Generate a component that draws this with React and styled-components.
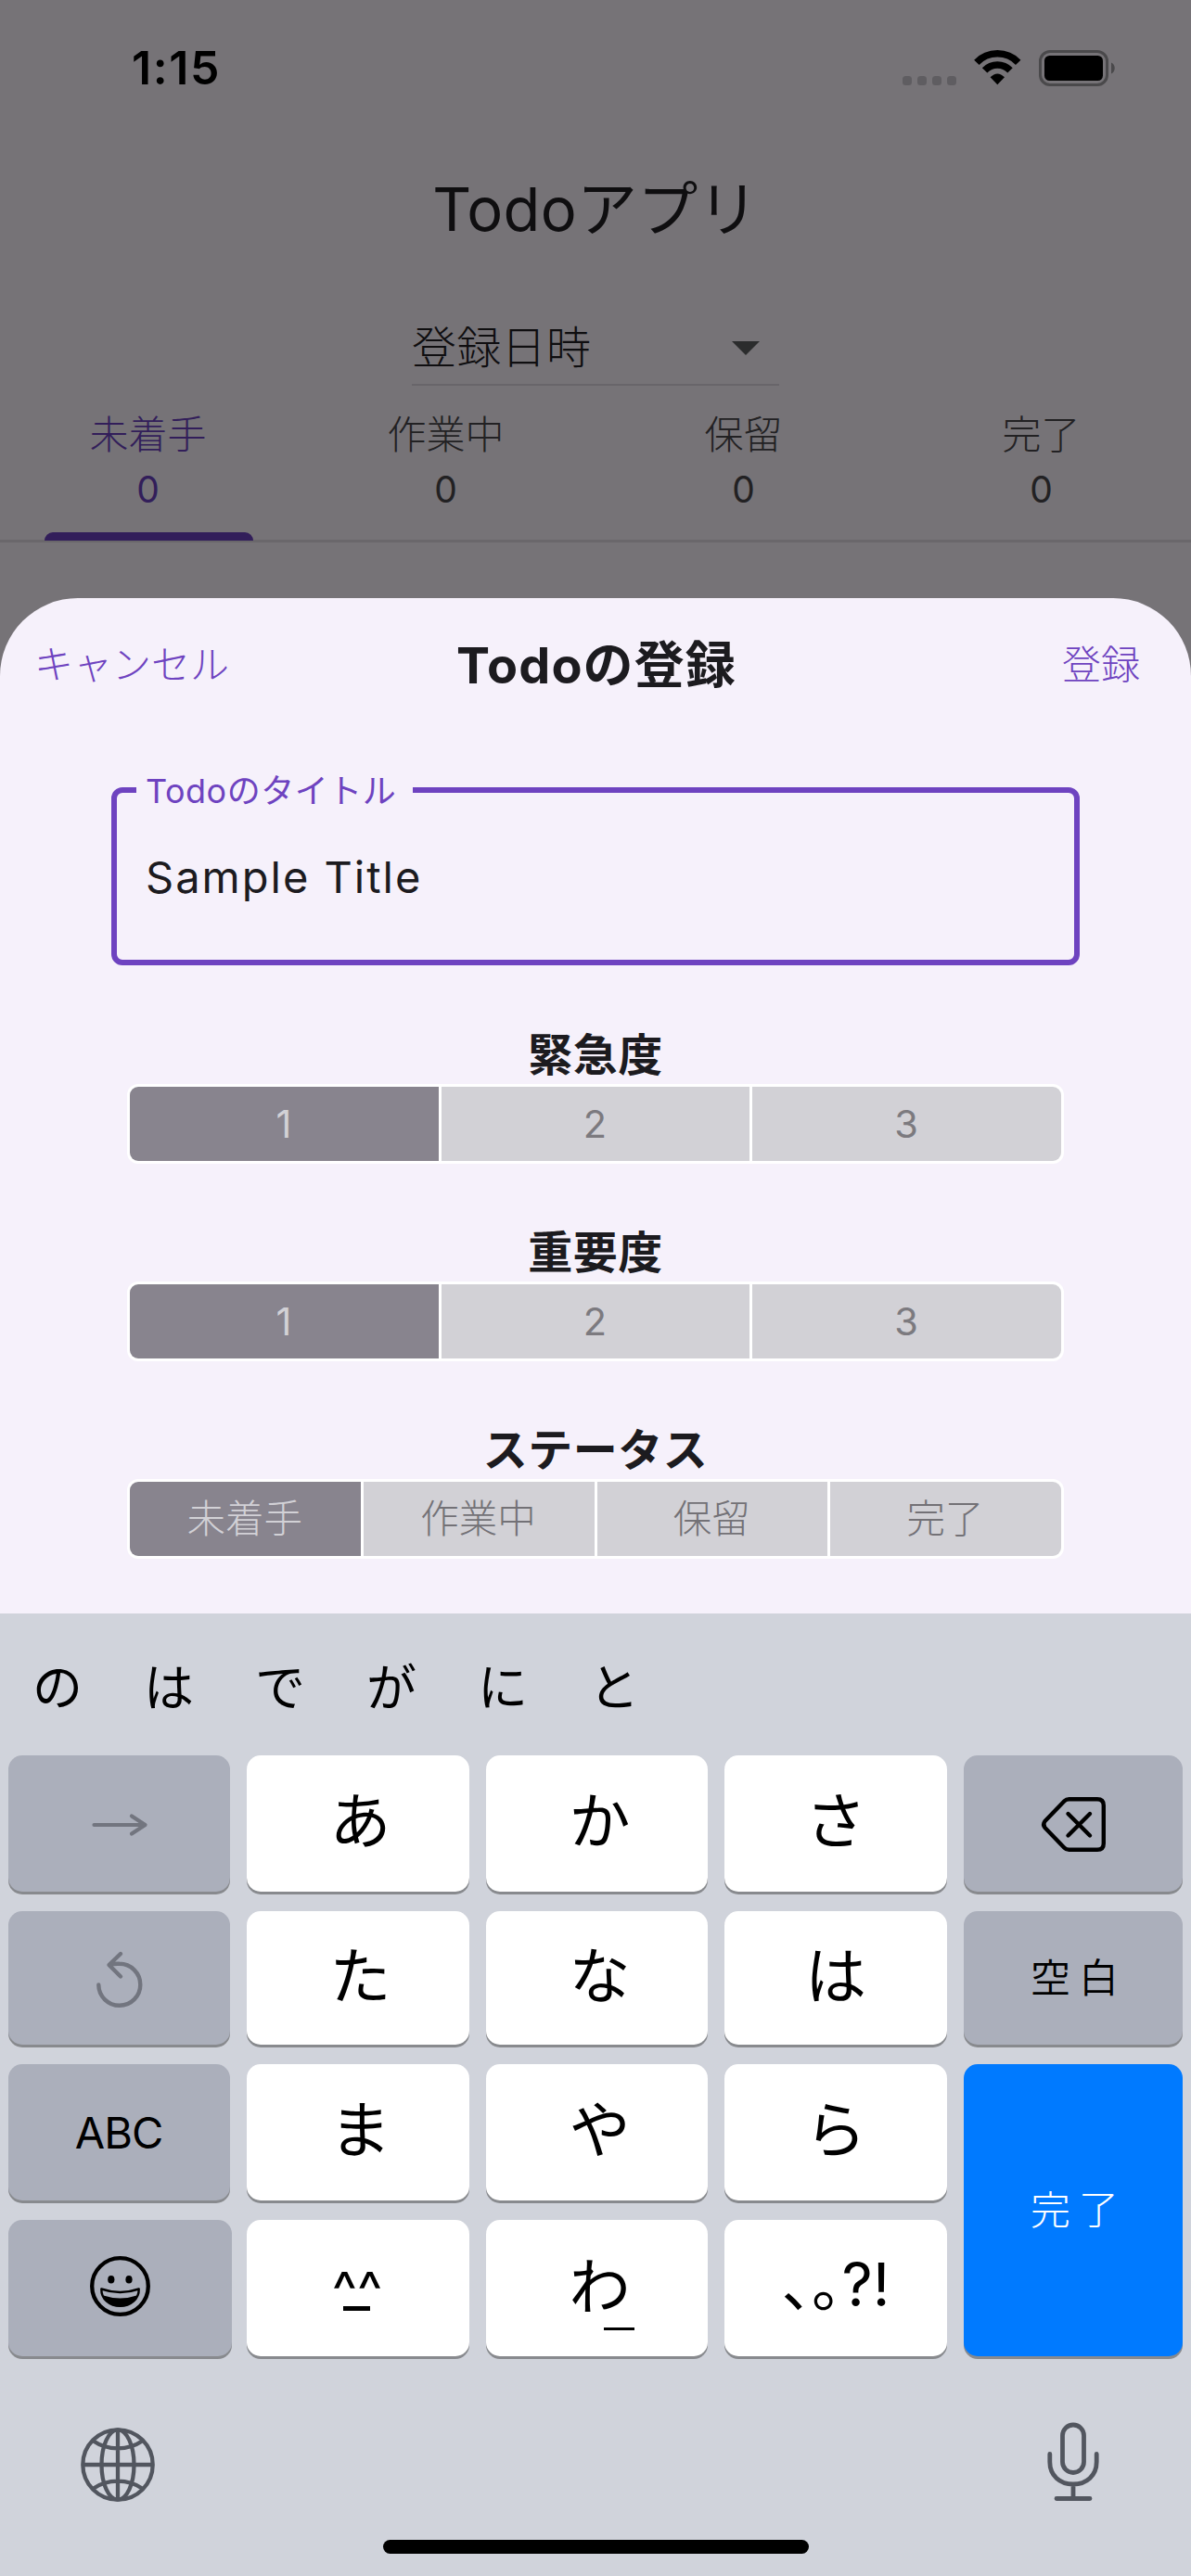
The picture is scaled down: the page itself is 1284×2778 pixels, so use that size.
import React from "react";
import styled, { createGlobalStyle } from "styled-components";

const GlobalStyle = createGlobalStyle`
  * { box-sizing: border-box; }
  body {
    margin: 0;
    background: #767377;
    font-family: Inter, "Noto Sans CJK JP", sans-serif;
    -webkit-font-smoothing: antialiased;
  }
  button { font: inherit; border: 0; padding: 0; background: none; }
`;

const Phone = styled.div`
  width: 1284px;
  height: 2778px;
  display: flex;
  flex-direction: column;
  overflow: hidden;
  background: #767377;
`;

const Page = styled.header`
  height: 645px;
  display: flex;
  flex-direction: column;
  align-items: center;
`;

const StatusBar = styled.div`
  width: 100%;
  height: 146px;
  padding: 0 82px 0 142px;
  display: flex;
  align-items: center;
  justify-content: space-between;
`;

const Clock = styled.span`
  font-size: 50px;
  font-weight: 600;
  letter-spacing: 1.6px;
  color: #000;
`;

const StatusIcons = styled.div`
  display: flex;
  align-items: center;
  gap: 19px;
`;

const Signal = styled.div`
  display: flex;
  gap: 6px;
  margin-top: 27px;
`;

const SignalDot = styled.i`
  width: 10px;
  height: 10px;
  border-radius: 3.5px;
  background: #5f5d61;
`;

const AppTitle = styled.h1`
  margin: 0;
  height: 159px;
  line-height: 159px;
  font-size: 65px;
  font-weight: 400;
  letter-spacing: 0.3px;
  color: #0f0e10;
`;

const SortSelect = styled.div`
  width: 396px;
  height: 84px;
  margin-top: 27px;
  padding: 0 21px 4px 0;
  display: flex;
  align-items: center;
  justify-content: space-between;
  border-bottom: 2px solid #68656a;
  font-size: 48px;
  font-weight: 300;
  letter-spacing: 0.3px;
  color: #0f0e10;
`;

const Tabs = styled.nav`
  width: 100%;
  height: 169px;
  display: grid;
  grid-template-columns: repeat(4, 1fr);
  border-bottom: 3px solid #6a676b;
`;

const Tab = styled.div`
  display: flex;
  flex-direction: column;
  align-items: center;
  padding: 23px 2px 0 0;
  font-size: 42px;
  font-weight: 300;
  line-height: 60px;
  color: ${(p) => (p.$active ? "#321e5a" : "#222123")};
`;

const TabCount = styled.span`
  font-size: 39px;
  font-weight: 400;
  line-height: 58px;
`;

const TabIndicator = styled.i`
  width: 225px;
  height: 9px;
  margin: 17px 0 0 2px;
  border-radius: 9px 9px 0 0;
  background: #321e5a;
`;

const Sheet = styled.main`
  height: 1095px;
  border-radius: 84px 84px 0 0;
  background: #f6f1fb;
`;

const SheetHeader = styled.div`
  height: 143px;
  padding: 0 36px 7px 38px;
  display: grid;
  grid-template-columns: 1fr auto 1fr;
  align-items: center;
`;

const TextAction = styled.button`
  justify-self: ${(p) => p.$side};
  margin: ${(p) => (p.$side === "end" ? "0 19px 0 0" : "0 0 0 -1px")};
  font-size: 42px;
  font-weight: 300;
  color: #6e43c0;
`;

const SheetTitle = styled.h2`
  margin: 0;
  font-size: 54px;
  font-weight: 700;
  letter-spacing: 1.1px;
  color: #1c1b1f;
`;

const Field = styled.fieldset`
  margin: 46px 120px 0;
  height: 207px;
  padding: 0 31px;
  border: 6px solid #6e43c0;
  border-radius: 12px;
`;

const FieldLabel = styled.legend`
  margin-left: -10px;
  width: 298px;
  padding: 2px 10px 0;
  font-size: 36px;
  line-height: 34px;
  letter-spacing: 0.5px;
  white-space: nowrap;
  color: #6e43c0;
`;

const FieldValue = styled.div`
  padding-top: 46px;
  font-size: 47px;
  line-height: 60px;
  letter-spacing: 2px;
  color: #1c1b1f;
`;

const Section = styled.section`
  margin: ${(p) => (p.$first ? 64 : 63)}px 137px 0;
`;

const SectionTitle = styled.h3`
  margin: 0;
  padding-top: 2px;
  text-align: center;
  font-size: 48px;
  line-height: 62px;
  font-weight: 700;
  letter-spacing: 0.5px;
  color: #1c1b1f;
`;

const Segments = styled.div`
  height: 86px;
  display: flex;
  gap: 3px;
  padding: 3px;
  border-radius: 12px;
  background: #fff;
`;

const Segment = styled.div`
  flex: 1;
  display: flex;
  align-items: center;
  justify-content: center;
  padding: ${(p) => (p.$kanji ? "0 1px 6px 0" : "0 1px 0 0")};
  font-size: 41.5px;
  font-weight: ${(p) => (p.$kanji ? 300 : 400)};
  background: ${(p) => (p.$selected ? "#88848e" : "#d2d1d6")};
  color: ${(p) => (p.$selected ? "#d2d1d6" : p.$kanji ? "#737176" : "#7c7a7f")};
  &:first-child { border-radius: 9px 0 0 9px; }
  &:last-child { border-radius: 0 9px 9px 0; }
`;

const Keyboard = styled.footer`
  flex: 1;
  display: flex;
  flex-direction: column;
  background: #d0d3db;
`;

const Candidates = styled.div`
  height: 153px;
  padding: 0 0 0 2px;
  display: flex;
  align-items: center;
`;

const Candidate = styled.span`
  width: 120px;
  text-align: center;
  font-size: 54px;
  color: #000;
`;

const Keys = styled.div`
  display: grid;
  grid-template-columns: 239px 240px 239px 240px 236px;
  grid-template-rows: 147px 144px 147px 147px;
  gap: 21px 18px;
  padding-left: 9px;
`;

const tones = {
  light: { background: "#fff", color: "#000" },
  gray: { background: "#abafbb", color: "#000" },
  muted: { background: "#abafbb", color: "#72757f" },
  blue: { background: "#007aff", color: "#fff" },
};

const Key = styled.button`
  display: flex;
  align-items: center;
  justify-content: center;
  grid-row: span ${(p) => p.$rows || 1};
  margin-right: ${(p) => (p.$wide ? -2 : 0)}px;
  border-radius: 15px;
  box-shadow: 0 3px 0 #888a8e;
  background: ${(p) => tones[p.$tone].background};
  color: ${(p) => tones[p.$tone].color};
  line-height: 1;
`;

const KanjiLabel = styled.span`
  padding-left: 3px;
  font-size: 43px;
  font-weight: ${(p) => p.$weight || 300};
  letter-spacing: 9px;
  margin-right: -9px;
`;

const LatinLabel = styled.span`
  font-size: 47px;
  letter-spacing: -1px;
  margin-right: 1px;
`;

const Kana = styled.span`
  font-size: 66px;
  padding-bottom: 5px;
  padding-left: ${(p) => p.$inset}px;
`;

const Face = styled.span`
  display: flex;
  flex-direction: column;
  align-items: center;
  font-size: 58px;
  line-height: 26px;
  padding: 14px 2px 0 0;
`;

const FaceMouth = styled.i`
  width: 29px;
  height: 5px;
  margin-top: 4px;
  background: #000;
`;

const WaKey = styled.span`
  display: flex;
  flex-direction: column;
  align-items: center;
  font-size: 66px;
  padding: 10px 0 0 6px;
`;

const WaBar = styled.i`
  width: 33px;
  height: 3px;
  margin: 11px 0 0 42px;
  background: #000;
`;

const Marks = styled.span`
  padding-bottom: 8px;
  font-size: 65px;
  font-feature-settings: "halt";
`;

const KeyboardFooter = styled.div`
  height: 198px;
  padding: 71px 99px 0 87px;
  display: flex;
  align-items: flex-start;
  justify-content: space-between;
`;

const HomeIndicator = styled.div`
  width: 459px;
  height: 15px;
  margin: 0 auto;
  border-radius: 8px;
  background: #000;
`;

const Icon = styled.svg`
  display: block;
  flex: none;
  overflow: visible;
  margin-top: ${(p) => p.$top || 0}px;
`;

const line = {
  fill: "none",
  stroke: "currentColor",
  strokeLinecap: "round",
  strokeLinejoin: "round",
};

const WifiIcon = () => (
  <Icon width="51" height="38" viewBox="0 0 51 38">
    <path d="M2.9 13.3A31.2 31.2 0 0 1 47.7 13.3" fill="none" stroke="#000" strokeWidth="7.6" />
    <path d="M11.6 21.8A19 19 0 0 1 39 21.8" fill="none" stroke="#000" strokeWidth="7.6" />
    <path d="M25.3 37.3L17.6 29.3Q25.3 21.5 33 29.3Z" fill="#000" />
  </Icon>
);

const BatteryIcon = () => (
  <Icon width="82" height="39" viewBox="0 0 82 39">
    <rect x="1.5" y="1.5" width="72" height="36" rx="10.5" fill="none" stroke="#4a494b" strokeWidth="3" />
    <rect x="6" y="6" width="63" height="27" rx="5.5" fill="#000" />
    <path d="M78 13.5c5 2 5 10 0 12Z" fill="#4a494b" />
  </Icon>
);

const CaretIcon = () => (
  <Icon width="30" height="15" viewBox="0 0 30 15" $top={8}>
    <path d="M0 0H30L15 15Z" fill="#2b2c2d" />
  </Icon>
);

const ArrowIcon = () => (
  <Icon width="60" height="24" viewBox="0 0 60 24" $top={3} {...line} strokeWidth="4.2">
    <path d="M2.5 12H57M43 2.5L57.5 12L43 21.5" />
  </Icon>
);

const UndoIcon = () => (
  <Icon width="50" height="60" viewBox="0 0 50 60" $top={4} {...line} strokeWidth="4.4">
    <path d="M2.3 35.5A22.5 22.5 0 1 0 24.8 12.8Q19 12.5 14.5 13.9M26 2L13.5 14L26 26.5" />
  </Icon>
);

const BackspaceIcon = () => (
  <Icon width="69" height="59" viewBox="0 0 69 59" $top={1} {...line} strokeWidth="4.4">
    <path d="M29.5 2.2H60Q66.8 2.2 66.8 9V50Q66.8 56.8 60 56.8H29.5Q26.5 56.8 24.5 54.7L3.5 33Q0.8 29.5 3.5 26L24.5 4.3Q26.5 2.2 29.5 2.2Z" />
    <path d="M28.5 18L52 41.5M52 18L28.5 41.5" />
  </Icon>
);

const SmileIcon = () => (
  <Icon width="65" height="65" viewBox="0 0 65 65" $top={-4}>
    <circle cx="32.5" cy="32.5" r="30.3" fill="none" stroke="#000" strokeWidth="4.3" />
    <ellipse cx="22.8" cy="25.2" rx="3.6" ry="4.3" />
    <ellipse cx="42" cy="25.2" rx="3.6" ry="4.3" />
    <path d="M12.3 35.5Q32.5 42.5 52.7 35.5C53 46 44 53.8 32.5 53.8S12 46 12.3 35.5Z" fill="none" stroke="#000" strokeWidth="2.4" strokeLinejoin="round" />
    <path d="M14.5 42.5Q32.5 48.5 50.5 42.5C47.5 50 41 54.5 32.5 54.5S17.5 50 14.5 42.5Z" />
  </Icon>
);

const GlobeIcon = () => (
  <Icon width="80" height="80" viewBox="0 0 80 80" $top={6} fill="none" stroke="#52565f" strokeWidth="4.3">
    <circle cx="40" cy="40" r="37.7" />
    <ellipse cx="40" cy="40" rx="17.5" ry="37.7" />
    <path d="M40 2V78M2 40H78M13 14Q25 22.3 40 22.3T67 14M13 66Q25 57.7 40 57.7T67 66" />
  </Icon>
);

const MicIcon = () => (
  <Icon width="56" height="86" viewBox="0 0 56 86" fill="none" stroke="#52565f" strokeWidth="4.8" strokeLinecap="round">
    <rect x="16.5" y="3" width="23" height="51.5" rx="11.5" />
    <path d="M2.8 34.5V43C2.8 57.5 13.5 67 28 67S53.2 57.5 53.2 43V34.5M28 67V82M10 82.5H46" />
  </Icon>
);

const tabs = ["未着手", "作業中", "保留", "完了"];
const sections = [
  { title: "緊急度", options: ["1", "2", "3"] },
  { title: "重要度", options: ["1", "2", "3"] },
  { title: "ステータス", options: tabs, kanji: true },
];
const candidates = ["の", "は", "で", "が", "に", "と"];

const kanaInsets = [5, 6, 0];

const KanaKeys = ({ letters }) =>
  letters.map((letter, i) => (
    <Key key={letter} $tone="light">
      <Kana $inset={kanaInsets[i]}>{letter}</Kana>
    </Key>
  ));

export default function App() {
  return (
    <Phone>
      <GlobalStyle />
      <Page>
        <StatusBar>
          <Clock>1:15</Clock>
          <StatusIcons>
            <Signal>
              <SignalDot />
              <SignalDot />
              <SignalDot />
              <SignalDot />
            </Signal>
            <WifiIcon />
            <BatteryIcon />
          </StatusIcons>
        </StatusBar>
        <AppTitle>Todoアプリ</AppTitle>
        <SortSelect>
          登録日時
          <CaretIcon />
        </SortSelect>
        <Tabs>
          {tabs.map((label, i) => (
            <Tab key={label} $active={i === 0}>
              {label}
              <TabCount>0</TabCount>
              {i === 0 && <TabIndicator />}
            </Tab>
          ))}
        </Tabs>
      </Page>

      <Sheet>
        <SheetHeader>
          <TextAction $side="start">キャンセル</TextAction>
          <SheetTitle>Todoの登録</SheetTitle>
          <TextAction $side="end">登録</TextAction>
        </SheetHeader>
        <Field>
          <FieldLabel>Todoのタイトル</FieldLabel>
          <FieldValue>Sample Title</FieldValue>
        </Field>
        {sections.map(({ title, options, kanji }, s) => (
          <Section key={title} $first={s === 0}>
            <SectionTitle>{title}</SectionTitle>
            <Segments>
              {options.map((option, i) => (
                <Segment key={option} $selected={i === 0} $kanji={kanji}>
                  {option}
                </Segment>
              ))}
            </Segments>
          </Section>
        ))}
      </Sheet>

      <Keyboard>
        <Candidates>
          {candidates.map((c) => (
            <Candidate key={c}>{c}</Candidate>
          ))}
        </Candidates>
        <Keys>
          <Key $tone="muted">
            <ArrowIcon />
          </Key>
          <KanaKeys letters={["あ", "か", "さ"]} />
          <Key $tone="gray">
            <BackspaceIcon />
          </Key>

          <Key $tone="muted">
            <UndoIcon />
          </Key>
          <KanaKeys letters={["た", "な", "は"]} />
          <Key $tone="gray">
            <KanjiLabel $weight={350}>空白</KanjiLabel>
          </Key>

          <Key $tone="gray">
            <LatinLabel>ABC</LatinLabel>
          </Key>
          <KanaKeys letters={["ま", "や", "ら"]} />
          <Key $tone="blue" $rows={2}>
            <KanjiLabel>完了</KanjiLabel>
          </Key>

          <Key $tone="gray" $wide>
            <SmileIcon />
          </Key>
          <Key $tone="light">
            <Face>
              ^^
              <FaceMouth />
            </Face>
          </Key>
          <Key $tone="light">
            <WaKey>
              わ
              <WaBar />
            </WaKey>
          </Key>
          <Key $tone="light">
            <Marks>、。?!</Marks>
          </Key>
        </Keys>
        <KeyboardFooter>
          <GlobeIcon />
          <MicIcon />
        </KeyboardFooter>
        <HomeIndicator />
      </Keyboard>
    </Phone>
  );
}
